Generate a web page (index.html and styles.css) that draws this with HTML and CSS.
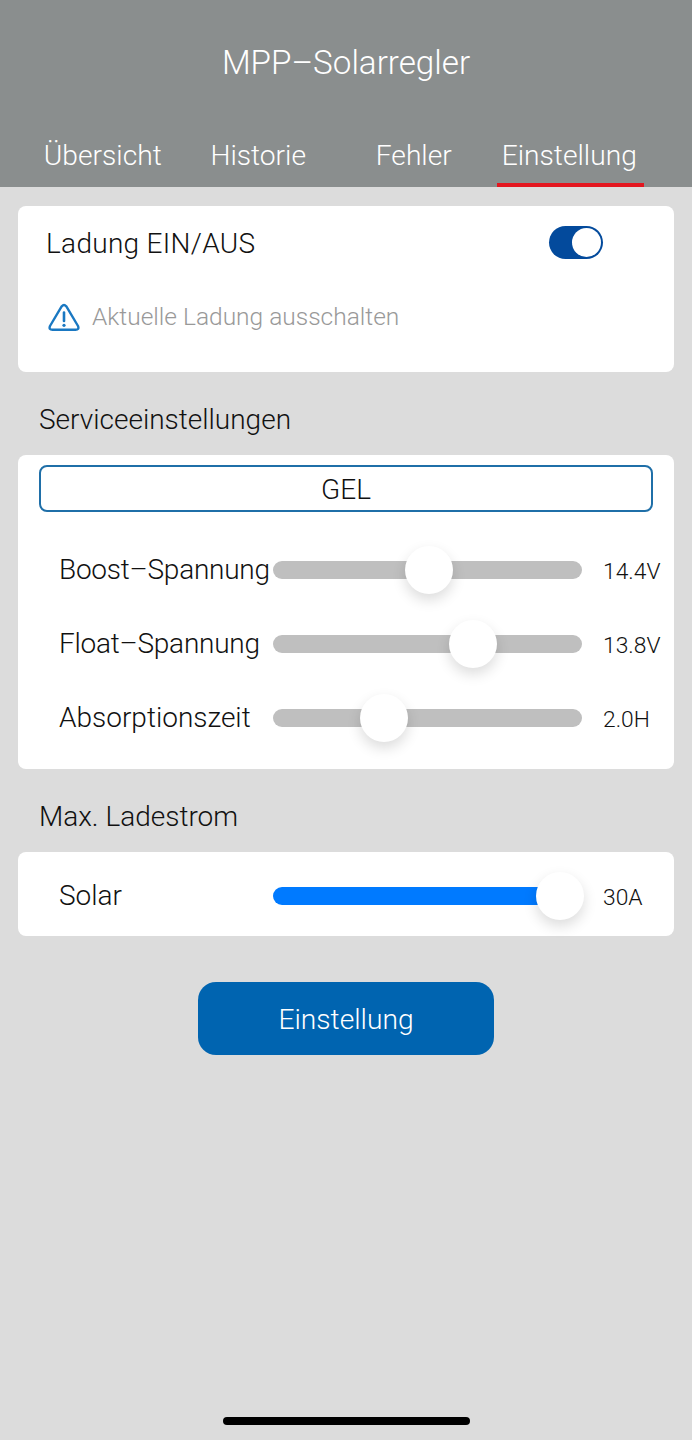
FILE: index.html
```html
<!DOCTYPE html>
<html lang="de">
<head>
    <meta charset="UTF-8">
    <meta name="viewport" content="width=device-width, initial-scale=1.0">
    <title>MPP-Solarregler</title>
    <link rel="stylesheet" href="styles.css">
</head>
<body>
    <div class="telefon">
        <header class="kopf">
            <h1 class="titel">MPP–Solarregler</h1>
            <nav class="tabs">
                <a href="#" class="tab">Übersicht</a>
                <a href="#" class="tab">Historie</a>
                <a href="#" class="tab">Fehler</a>
                <a href="#" class="tab tab-aktiv">Einstellung</a>
            </nav>
        </header>

        <main class="inhalt">
            <section class="karte karte-ladung">
                <div class="ladung-zeile">
                    <span class="ladung-titel">Ladung EIN/AUS</span>
                    <span class="schalter"><span class="schalter-knopf"></span></span>
                </div>
                <div class="hinweis">
                    <svg class="hinweis-icon" viewBox="0 0 32 28" fill="none">
                        <path d="M13.800 3.200 Q16 0.800 18.200 3.200 L30 23 Q31.500 26.800 27.500 26.800 L4.500 26.800 Q0.500 26.800 2 23 Z" stroke="#1a78c2" stroke-width="2.400" stroke-linejoin="round"/>
                        <path d="M16 9.500 V18" stroke="#1a78c2" stroke-width="2.600" stroke-linecap="round"/>
                        <circle cx="16" cy="22.300" r="1.600" fill="#1a78c2"/>
                    </svg>
                    <span class="hinweis-text">Aktuelle Ladung ausschalten</span>
                </div>
            </section>

            <h2 class="abschnitt">Serviceeinstellungen</h2>
            <section class="karte karte-service">
                <div class="auswahl">GEL</div>
                <div class="regler-zeile">
                    <span class="regler-name regler-name-eng">Boost–Spannung</span>
                    <div class="regler"><span class="regler-knopf" style="left: 132px"></span></div>
                    <span class="regler-wert">14.4V</span>
                </div>
                <div class="regler-zeile">
                    <span class="regler-name regler-name-eng">Float–Spannung</span>
                    <div class="regler"><span class="regler-knopf" style="left: 176px"></span></div>
                    <span class="regler-wert">13.8V</span>
                </div>
                <div class="regler-zeile">
                    <span class="regler-name">Absorptionszeit</span>
                    <div class="regler"><span class="regler-knopf" style="left: 87px"></span></div>
                    <span class="regler-wert">2.0H</span>
                </div>
            </section>

            <h2 class="abschnitt abschnitt-strom">Max. Ladestrom</h2>
            <section class="karte karte-strom">
                <div class="regler-zeile">
                    <span class="regler-name">Solar</span>
                    <div class="regler regler-blau"><span class="regler-knopf" style="left: 263px"></span></div>
                    <span class="regler-wert">30A</span>
                </div>
            </section>

            <button class="speichern">Einstellung</button>
        </main>

        <div class="home-leiste"></div>
    </div>
</body>
</html>
```

FILE: styles.css
```css
* {
    box-sizing: border-box;
}

body {
    margin: 0;
    background-color: #dcdcdc;
    font-family: Roboto, "Liberation Sans", sans-serif;
}

.telefon {
    display: flex;
    flex-direction: column;
    width: 692px;
    height: 1440px;
    overflow: hidden;
}

/* KOPF */
.kopf {
    height: 187px;
    padding-top: 42px;
    background-color: #8a8e8e;
    color: #fff;
}

.titel {
    margin: 0;
    height: 40px;
    font-size: 33.200px;
    font-weight: 300;
    line-height: 42px;
    text-align: center;
}

.tabs {
    display: flex;
    margin-top: 52px;
    padding: 0 25px;
}

.tab {
    position: relative;
    width: 155.500px;
    height: 53px;
    padding-top: 5px;
    color: #fff;
    font-size: 28.200px;
    font-weight: 300;
    line-height: 34px;
    text-align: center;
    text-decoration: none;
}

.tab-aktiv::after {
    content: "";
    position: absolute;
    left: 5px;
    right: 3px;
    bottom: 0;
    height: 4px;
    background-color: #e3161f;
}

/* INHALT */
.inhalt {
    display: flex;
    flex: 1;
    flex-direction: column;
    padding: 19px 18px 0;
}

.karte {
    border-radius: 8px;
    background-color: #fff;
}

.karte-ladung {
    height: 166px;
    padding: 20px 28px 0 28px;
}

.ladung-zeile {
    display: flex;
    align-items: center;
    justify-content: space-between;
    height: 33px;
    padding-right: 43px;
}

.ladung-titel {
    padding-top: 2px;
    color: #111;
    font-size: 28px;
    font-weight: 300;
    letter-spacing: 0.3px;
}

.schalter {
    display: flex;
    justify-content: flex-end;
    align-items: center;
    width: 54px;
    height: 33px;
    padding-right: 2px;
    border-radius: 17px;
    background-color: #034a9c;
}

.schalter-knopf {
    width: 29px;
    height: 29px;
    border-radius: 50%;
    background-color: #fff;
}

.hinweis {
    display: flex;
    align-items: center;
    gap: 12px;
    margin-top: 43px;
    padding-left: 2px;
}

.hinweis-icon {
    flex: none;
    width: 32px;
    height: 28px;
}

.hinweis-text {
    color: #999;
    font-size: 24.500px;
    font-weight: 300;
}

.abschnitt {
    margin: 31px 0 0 21px;
    height: 32px;
    color: #111;
    font-size: 28px;
    font-weight: 300;
    line-height: 34px;
}

.abschnitt-strom {
    margin-top: 31px;
}

.karte-service {
    height: 314px;
    margin-top: 20px;
    padding: 10px 21px 0;
}

.auswahl {
    height: 47px;
    margin-bottom: 34px;
    border: 2px solid #1f6fa8;
    border-radius: 8px;
    color: #111;
    font-size: 28px;
    font-weight: 300;
    line-height: 46px;
    text-align: center;
}

.karte-service .regler-zeile {
    margin: 0 -21px 26px;
}

.karte-strom {
    height: 84px;
    margin-top: 20px;
    padding-top: 20px;
}

.regler-zeile {
    display: flex;
    align-items: center;
    height: 48px;
    padding-left: 41px;
}

.regler-name {
    width: 214px;
    margin-top: -2px;
    color: #111;
    font-size: 28px;
    font-weight: 300;
    white-space: nowrap;
}

.regler-name-eng {
    letter-spacing: -0.25px;
}

.regler {
    position: relative;
    width: 309px;
    height: 18px;
    border-radius: 9px;
    background-color: #bfbfbf;
}

.regler-blau {
    background-color: #007aff;
}

.regler-knopf {
    position: absolute;
    top: -15px;
    width: 48px;
    height: 48px;
    border-radius: 50%;
    background-color: #fff;
    box-shadow: 0 6px 14px rgba(0, 0, 0, 0.14);
}

.regler-wert {
    margin-top: 3px;
    margin-left: 21px;
    color: #111;
    font-size: 22.800px;
    font-weight: 300;
    white-space: nowrap;
}

.speichern {
    align-self: center;
    width: 296px;
    height: 73px;
    margin-top: 46px;
    padding-top: 3px;
    border: 0;
    border-radius: 18px;
    background-color: #0064b0;
    color: #fff;
    font-family: inherit;
    font-size: 28.200px;
    font-weight: 300;
}

.home-leiste {
    flex: none;
    align-self: center;
    width: 247px;
    height: 8px;
    margin-bottom: 15px;
    border-radius: 4px;
    background-color: #000;
}
```
